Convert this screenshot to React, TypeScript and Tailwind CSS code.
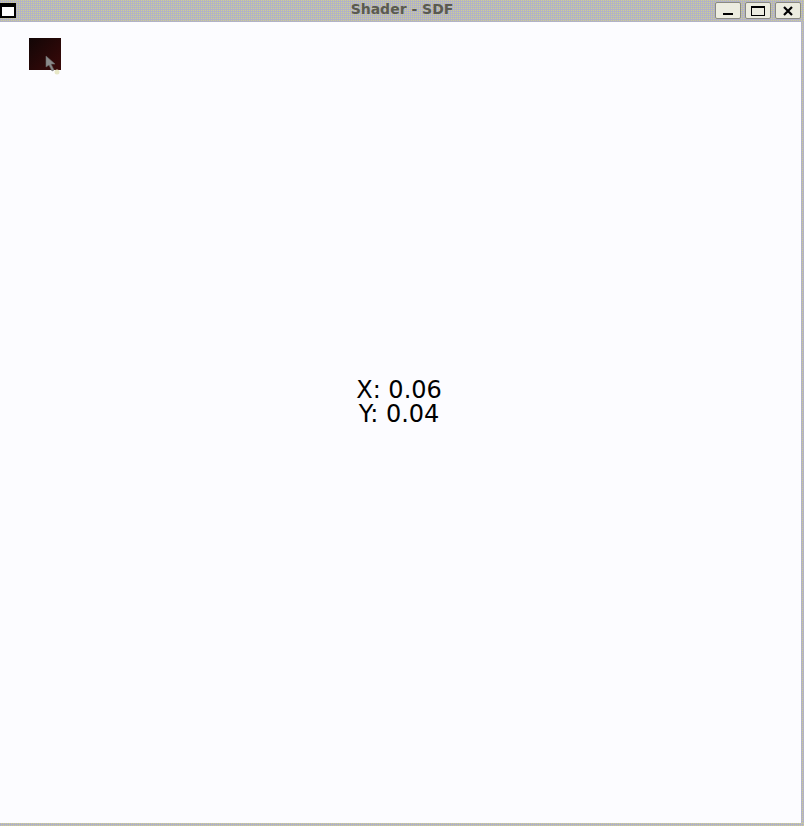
export default function App() {
  return (
    <div className="flex h-[826px] w-[804px] flex-col overflow-hidden bg-[#fcfcff] font-['DejaVu_Sans',sans-serif]">
      {/* title bar */}
      <div className="grid h-[22px] grid-cols-[1fr_auto_1fr] items-start bg-[conic-gradient(#d0d090_0_25%,#b2b2c6_0_100%)] bg-size-[2px_2px]">
        <div className="mt-[3px] h-[15px] w-[16px] border-2 border-t-[4px] border-black bg-white" />
        <div className="pt-[1px] text-center text-[14px] leading-[17px] font-bold text-[#5a5a50]">Shader - SDF</div>
        <div className="mt-[2px] mr-[3px] flex justify-end gap-[4px]">
          <button className="flex h-[17px] w-[26px] items-end justify-center rounded-[2px] border border-[#8a8a80] bg-[#ecece0] pb-[3px]">
            <span className="h-[2px] w-[10px] bg-black" />
          </button>
          <button className="flex h-[17px] w-[26px] items-center justify-center rounded-[2px] border border-[#8a8a80] bg-[#ecece0]">
            <span className="h-[10px] w-[14px] border border-t-2 border-black" />
          </button>
          <button className="flex h-[17px] w-[26px] items-center justify-center rounded-[2px] border border-[#8a8a80] bg-[#ecece0]">
            <svg width="10" height="10" viewBox="0 0 10 10">
              <path d="M1 1L9 9M9 1L1 9" stroke="black" strokeWidth="2.2" />
            </svg>
          </button>
        </div>
      </div>
      <div className="flex flex-1">
        <div className="flex flex-1 flex-col pt-4 pl-[29px]">
          <div className="relative h-[32px] w-[32px] bg-[linear-gradient(135deg,#120606,#2a0808_60%,#3a0a0a)]">
            <svg className="absolute top-[17px] left-[16px]" width="16" height="20" viewBox="0 0 16 20">
              <path d="M1 1L1 12L4 10L7 16L9 15L6 9L10 9Z" fill="#8a8a8a" stroke="#6a6a6a" strokeWidth="0.6" />
              <circle cx="12" cy="17" r="2.5" fill="#e8e8c8" />
            </svg>
          </div>
          <div className="mt-[308px] mr-[32px] flex flex-col items-center text-[24px] leading-[24px] text-black">
            <div>X: 0.06</div>
            <div>Y: 0.04</div>
          </div>
        </div>
        <div className="w-[3px] bg-[conic-gradient(#d0d090_0_25%,#b2b2c6_0_100%)] bg-size-[2px_2px]" />
      </div>
      <div className="h-[3px] bg-[conic-gradient(#d0d090_0_25%,#b2b2c6_0_100%)] bg-size-[2px_2px]" />
    </div>
  );
}
